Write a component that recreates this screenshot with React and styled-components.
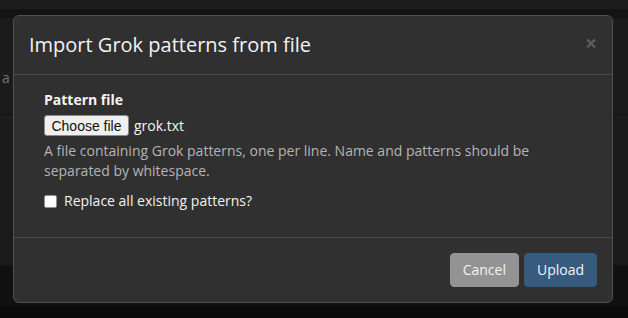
import React from "react";
import styled, { createGlobalStyle } from "styled-components";

const Global = createGlobalStyle`
  html, body { margin: 0; padding: 0; }
  body {
    width: 628px;
    height: 318px;
    overflow: hidden;
    background: #0b0b0b;
    font-family: "Open Sans", "DejaVu Sans", sans-serif;
    font-size: 14px;
    line-height: 20px;
    color: #f2f2f2;
  }
  * { box-sizing: border-box; }
`;

const Page = styled.div`
  position: relative;
  width: 628px;
  height: 318px;
  display: flex;
  flex-direction: column;
`;

const Band = styled.div`
  height: ${(p) => p.$h}px;
  background: ${(p) => p.$bg};
  flex: none;
  padding: ${(p) => p.$pt || 0}px 0 0 2px;
  color: #747474;
  font-size: 14px;
  line-height: 20px;
`;

const Modal = styled.div`
  position: absolute;
  top: 15px;
  left: 13px;
  width: 600px;
  height: 288px;
  background: #303030;
  border: 1px solid #505050;
  border-radius: 6px;
  display: flex;
  flex-direction: column;
`;

const Header = styled.div`
  display: flex;
  align-items: flex-start;
  justify-content: space-between;
  padding: 15px;
  border-bottom: 1px solid #4a4a4a;
`;

const Title = styled.h4`
  margin: 0;
  font-size: 20px;
  line-height: 28px;
  font-weight: 400;
  color: #f3f3f3;
`;

const Close = styled.button`
  border: 0;
  background: transparent;
  padding: 0;
  font-family: "Open Sans", sans-serif;
  font-size: 21px;
  font-weight: 700;
  line-height: 24px;
  color: #5c5c5c;
  cursor: pointer;
`;

const Body = styled.div`
  padding: 15px 30px;
  flex: 1;
  display: flex;
  flex-direction: column;
`;

const Label = styled.label`
  font-weight: 700;
  color: #f5f5f5;
  margin-bottom: 5px;
`;

const FileRow = styled.div`
  display: flex;
  align-items: center;
  gap: 5px;
  height: 21px;
`;

const FileButton = styled.span`
  display: inline-flex;
  align-items: center;
  justify-content: center;
  width: 85px;
  height: 21px;
  background: #efefef;
  border: 1px solid #8a8a8a;
  border-radius: 3px;
  font-family: "Liberation Sans", Arial, sans-serif;
  font-size: 14px;
  color: #111;
`;

const FileName = styled.span`
  color: #f5f5f5;
  font-size: 14px;
`;

const Help = styled.p`
  margin: 5px 0 10px;
  color: #b4b4b4;
`;

const CheckRow = styled.label`
  display: flex;
  align-items: center;
  gap: 7px;
  color: #f2f2f2;
`;

const Box = styled.span`
  width: 13px;
  height: 13px;
  background: #fff;
  border: 1px solid #8f8f8f;
  border-radius: 2px;
  margin-top: 1px;
`;

const Footer = styled.div`
  display: flex;
  justify-content: flex-end;
  gap: 5px;
  padding: 15px;
  border-top: 1px solid #4a4a4a;
`;

const Button = styled.button`
  height: 34px;
  padding: 6px 12px;
  border: 1px solid ${(p) => p.$bg};
  background: ${(p) => p.$bg};
  color: #f4f4f4;
  border-radius: 4px;
  font-family: "Open Sans", sans-serif;
  font-size: 14px;
  line-height: 20px;
  cursor: pointer;
`;

export default function App() {
  return (
    <>
      <Global />
      <Page>
        <Band $h={9} $bg="#1c1c1c" />
        <Band $h={9} $bg="#141414" />
        <Band $h={96} $bg="#1b1b1b" $pt={50}>a</Band>
        <Band $h={1} $bg="#111111" />
        <Band $h={150} $bg="#1b1b1b" />
        <Band $h={40} $bg="#111111" />
        <Modal>
          <Header>
            <Title>Import Grok patterns from file</Title>
            <Close aria-label="Close">×</Close>
          </Header>
          <Body>
            <Label>Pattern file</Label>
            <FileRow>
              <FileButton>Choose file</FileButton>
              <FileName>grok.txt</FileName>
            </FileRow>
            <Help>
              A file containing Grok patterns, one per line. Name and patterns should be separated by whitespace.
            </Help>
            <CheckRow>
              <Box />
              Replace all existing patterns?
            </CheckRow>
          </Body>
          <Footer>
            <Button $bg="#939393">Cancel</Button>
            <Button $bg="#375a7f">Upload</Button>
          </Footer>
        </Modal>
      </Page>
    </>
  );
}
